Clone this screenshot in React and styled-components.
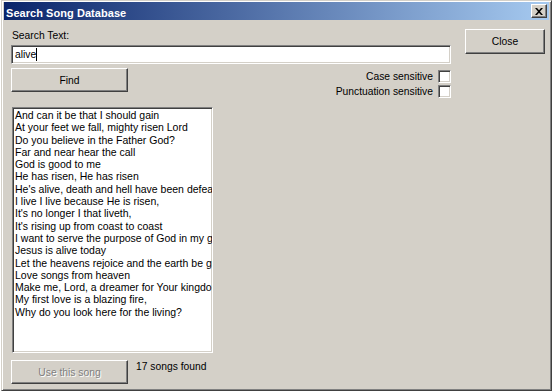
import React from "react";
import styled, { createGlobalStyle } from "styled-components";

const GlobalStyle = createGlobalStyle`
  html, body {
    margin: 0;
    padding: 0;
    background: #ffffff;
  }
  body {
    font-family: "Liberation Sans", Arial, sans-serif;
    font-size: 10.3px;
    color: #000000;
  }
`;

const Page = styled.div`
  width: 554px;
  height: 392px;
  overflow: hidden;
  padding-left: 1px;
  box-sizing: border-box;
`;

const Window = styled.div`
  width: 551px;
  height: 391px;
  box-sizing: border-box;
  background: #d4d0c8;
  border: 1px solid;
  border-color: #d4d0c8 #404040 #404040 #d4d0c8;
  box-shadow: inset 1px 1px #ffffff, inset -1px -1px #808080;
  padding: 1px 2px 2px 2px;
  display: flex;
  flex-direction: column;
`;

const TitleBar = styled.div`
  height: 18px;
  flex: none;
  display: flex;
  align-items: center;
  justify-content: space-between;
  padding: 0 2px 0 2px;
  background: linear-gradient(to right, #0a246a, #a6caf0);
`;

const Title = styled.span`
  color: #ffffff;
  font-weight: bold;
  font-size: 11px;
  padding-top: 3px;
  letter-spacing: 0.05px;
`;

const CaptionButton = styled.div`
  width: 16px;
  height: 14px;
  box-sizing: border-box;
  background: #d4d0c8;
  border: 1px solid;
  border-color: #ffffff #404040 #404040 #ffffff;
  box-shadow: inset -1px -1px #808080;
  display: flex;
  align-items: center;
  justify-content: center;
`;

const Body = styled.div`
  display: grid;
  grid-template-columns: 440px 80px;
  column-gap: 14px;
  align-items: start;
  padding: 9px 0 0 7px;
`;

const Main = styled.div`
  display: flex;
  flex-direction: column;
`;

const Label = styled.div`
  line-height: 14px;
  margin-bottom: 2px;
  padding-left: 1px;
`;

const sunken = `
  box-sizing: border-box;
  background: #ffffff;
  border: 1px solid;
  border-color: #808080 #ffffff #ffffff #808080;
  box-shadow: inset 1px 1px #404040, inset -1px -1px #d4d0c8;
`;

const TextField = styled.div`
  ${sunken}
  height: 19px;
  display: flex;
  align-items: center;
  padding: 0 3px;
`;

const Caret = styled.span`
  display: inline-block;
  width: 1px;
  height: 13px;
  background: #000000;
`;

const Row = styled.div`
  display: flex;
  justify-content: space-between;
  align-items: flex-start;
  margin-top: ${(p) => p.$top || 0}px;
`;

const Button = styled.button`
  box-sizing: border-box;
  width: ${(p) => p.$w}px;
  height: ${(p) => p.$h}px;
  margin: 0;
  padding: 0;
  font-family: "Liberation Sans", Arial, sans-serif;
  font-size: 10.3px;
  color: ${(p) => (p.disabled ? "#808080" : "#000000")};
  text-shadow: ${(p) => (p.disabled ? "1px 1px 0 #ffffff" : "none")};
  background: #d4d0c8;
  border: 1px solid;
  border-color: #ffffff #404040 #404040 #ffffff;
  box-shadow: inset -1px -1px #808080;
`;

const Options = styled.div`
  display: flex;
  flex-direction: column;
  align-items: flex-end;
  margin-top: 1px;
`;

const Option = styled.label`
  height: 15px;
  display: flex;
  align-items: center;
  gap: 5px;
`;

const CheckBox = styled.span`
  ${sunken}
  width: 13px;
  height: 13px;
`;

const List = styled.div`
  ${sunken}
  width: 201px;
  height: 246px;
  margin: 8px 0 0 1px;
  padding: 1px 2px;
  overflow: hidden;
  white-space: nowrap;
  font-size: 10.5px;
  line-height: 12.3px;
`;

const Footer = styled.div`
  display: flex;
  align-items: flex-start;
  gap: 8px;
  margin-top: 7px;
`;

const Status = styled.span`
  line-height: 14px;
`;

const songs = [
  "And can it be that I should gain",
  "At your feet we fall, mighty risen Lord",
  "Do you believe in the Father God?",
  "Far and near hear the call",
  "God is good to me",
  "He has risen, He has risen",
  "He's alive, death and hell have been defeated",
  "I live I live because He is risen,",
  "It's no longer I that liveth,",
  "It's rising up from coast to coast",
  "I want to serve the purpose of God in my generation",
  "Jesus is alive today",
  "Let the heavens rejoice and the earth be glad",
  "Love songs from heaven",
  "Make me, Lord, a dreamer for Your kingdom",
  "My first love is a blazing fire,",
  "Why do you look here for the living?",
];

const App = () => {
  return (
    <Page>
      <GlobalStyle />
      <Window>
        <TitleBar>
          <Title>Search Song Database</Title>
          <CaptionButton>
            <svg width="8" height="7" viewBox="0 0 8 7">
              <path d="M0 0h2l2 2.2L6 0h2L5 3.5 8 7H6L4 4.8 2 7H0l3-3.5z" fill="#000" />
            </svg>
          </CaptionButton>
        </TitleBar>
        <Body>
          <Main>
            <Label>Search Text:</Label>
            <TextField>
              alive
              <Caret />
            </TextField>
            <Row $top={4}>
              <Button $w={117} $h={24}>Find</Button>
              <Options>
                <Option>
                  Case sensitive
                  <CheckBox />
                </Option>
                <Option>
                  Punctuation sensitive
                  <CheckBox />
                </Option>
              </Options>
            </Row>
            <List>
              {songs.map((s) => (
                <div key={s}>{s}</div>
              ))}
            </List>
            <Footer>
              <Button $w={117} $h={24} disabled>
                Use this song
              </Button>
              <Status>17 songs found</Status>
            </Footer>
          </Main>
          <Button $w={80} $h={25}>Close</Button>
        </Body>
      </Window>
    </Page>
  );
};

export default App;
